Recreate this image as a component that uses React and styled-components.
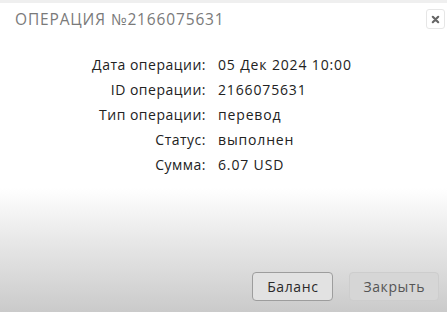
import styled, { createGlobalStyle } from "styled-components";

const GlobalStyle = createGlobalStyle`
  html, body {
    margin: 0;
    padding: 0;
  }
  body {
    font-family: "Open Sans", "Noto Sans", sans-serif;
  }
`;

const Modal = styled.div`
  width: 447px;
  height: 312px;
  box-sizing: border-box;
  border-top: 3px solid #efefef;
  background: linear-gradient(
    to bottom,
    #ffffff 0px,
    #ffffff 185px,
    #ebebeb 230px,
    #c9c9c9 312px
  );
  display: flex;
  flex-direction: column;
`;

const Header = styled.div`
  display: flex;
  align-items: center;
  justify-content: space-between;
  padding: 3px 2px 0 15px;
  height: 26px;
`;

const Title = styled.h2`
  margin: 0;
  font-size: 15.5px;
  font-weight: 500;
  letter-spacing: 0.85px;
  color: #7a7a7a;
`;

const CloseButton = styled.button`
  width: 19px;
  height: 20px;
  padding: 0;
  border: 1px solid #e6e6e6;
  border-radius: 3px;
  background: #fff;
  display: flex;
  align-items: center;
  justify-content: center;
`;

const Details = styled.div`
  display: grid;
  grid-template-columns: 206px auto;
  column-gap: 12px;
  margin-top: 20px;
  font-size: 14px;
  color: #222;
`;

const Label = styled.div`
  text-align: right;
  line-height: 25px;
  letter-spacing: 0.5px;
`;

const Value = styled.div`
  line-height: 25px;
  letter-spacing: 0.85px;
`;

const Footer = styled.div`
  margin-top: auto;
  display: flex;
  justify-content: flex-end;
  gap: 16px;
  padding: 0 8px 11px 0;
`;

const Button = styled.button`
  height: 29px;
  padding: 0 ${(p) => (p.$primary ? "14px" : "13px")};
  font-family: inherit;
  font-size: 14px;
  letter-spacing: 0.6px;
  border-radius: 4px;
  border: 1px solid ${(p) => (p.$primary ? "#9d9d9d" : "#cdcdcd")};
  background: ${(p) => (p.$primary ? "#e2e2e2" : "#d6d6d6")};
  color: ${(p) => (p.$primary ? "#2a2a2a" : "#555")};
`;

const rows = [
  ["Дата операции:", "05 Дек 2024 10:00"],
  ["ID операции:", "2166075631"],
  ["Тип операции:", "перевод"],
  ["Статус:", "выполнен"],
  ["Сумма:", "6.07 USD"],
];

export default function App() {
  return (
    <>
      <GlobalStyle />
      <Modal>
        <Header>
          <Title>ОПЕРАЦИЯ №2166075631</Title>
          <CloseButton aria-label="close">
            <svg width="9" height="9" viewBox="0 0 10 10">
              <path
                d="M2 2 L8 8 M8 2 L2 8"
                stroke="#666"
                strokeWidth="2.4"
                strokeLinecap="round"
              />
            </svg>
          </CloseButton>
        </Header>
        <Details>
          {rows.flatMap(([label, value]) => [
            <Label key={label}>{label}</Label>,
            <Value key={label + "v"}>{value}</Value>,
          ])}
        </Details>
        <Footer>
          <Button $primary>Баланс</Button>
          <Button>Закрыть</Button>
        </Footer>
      </Modal>
    </>
  );
}
